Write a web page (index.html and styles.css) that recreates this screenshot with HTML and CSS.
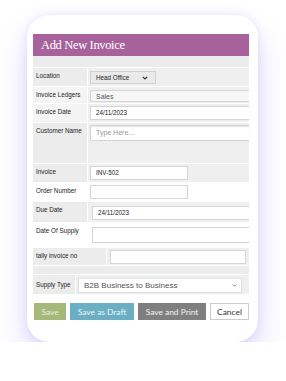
FILE: index.html
```html
<!DOCTYPE html>
<html>
<head>
  <title>Add New Invoice</title>
  <link rel="stylesheet" href="styles.css">
</head>
<body>
  <div class="card">
    <div class="banner">
      <h1>Add New Invoice</h1>
    </div>

    <div class="strip"></div>

    <div class="row r-location">
      <div class="label">Location</div>
      <div class="field">
        <div class="select small">Head Office
          <svg class="caret" width="6" height="4" viewBox="0 0 6 4"><path d="M0.8 0.8 L3 3 L5.2 0.8" fill="none" stroke="#333" stroke-width="1.2"/></svg>
        </div>
      </div>
    </div>
    <div class="row r-ledger light">
      <div class="label">Invoice Ledgers</div>
      <div class="field"><div class="input wide soft">Sales</div></div>
    </div>
    <div class="row r-date light">
      <div class="label">Invoice Date</div>
      <div class="field"><div class="input wide">24/11/2023</div></div>
    </div>
    <div class="row r-customer">
      <div class="label">Customer Name</div>
      <div class="field"><div class="input wide tall placeholder">Type Here...</div></div>
    </div>
    <div class="row r-invoice">
      <div class="label">Invoice</div>
      <div class="field"><div class="input short">INV-502</div></div>
    </div>
    <div class="row r-order white">
      <div class="label">Order Number</div>
      <div class="field"><div class="input short"></div></div>
    </div>
    <div class="row r-due">
      <div class="label">Due Date</div>
      <div class="field indent"><div class="input wide">24/11/2023</div></div>
    </div>
    <div class="row r-supply white">
      <div class="label">Date Of Supply</div>
      <div class="field indent"><div class="input wide tall"></div></div>
    </div>
    <div class="row r-tally">
      <div class="label tally">tally invoice no</div>
      <div class="field"><div class="input tally-input"></div></div>
    </div>

    <div class="strip thin"></div>

    <div class="row r-type">
      <div class="label type">Supply Type</div>
      <div class="field">
        <div class="select big">B2B Business to Business
          <svg class="caret" width="5" height="3" viewBox="0 0 6 4"><path d="M0.8 0.8 L3 3 L5.2 0.8" fill="none" stroke="#555" stroke-width="1"/></svg>
        </div>
      </div>
    </div>

    <div class="buttons">
      <button class="btn save">Save</button>
      <button class="btn draft">Save as Draft</button>
      <button class="btn print">Save and Print</button>
      <button class="btn cancel">Cancel</button>
    </div>
  </div>
</body>
</html>
```

FILE: styles.css
```css
body {
  margin: 0;
  background: #fff;
  font-family: "Liberation Sans", Arial, sans-serif;
}

.card {
  margin: 15px 0 0 27px;
  width: 216px;
  height: 308px;
  padding: 19px 9px 0 6px;
  background: #fff;
  border-radius: 22px;
  box-shadow: 0 18px 30px rgba(150, 130, 255, 0.32), 0 0 8px rgba(170, 160, 255, 0.25);
}

.banner {
  background-color: #a8629b;
  height: 22px;
  padding-left: 8px;
}

.banner h1 {
  margin: 0;
  font-family: "Liberation Serif", serif;
  font-weight: normal;
  font-size: 12.5px;
  letter-spacing: -0.35px;
  line-height: 23px;
  color: #fff;
}

.strip {
  height: 11px;
  background: #ececec;
}

.strip.thin {
  height: 8px;
  border-top: 1px solid #fff;
}

.row {
  display: flex;
  background: #efefef;
  border-top: 1px solid #fff;
  box-sizing: border-box;
}

.row.light .label {
  background: #f4f4f4;
}

.row.white .label,
.row.white .field {
  background: #fff;
}

.label {
  width: 55px;
  flex-shrink: 0;
  box-sizing: border-box;
  padding: 4px 0 0 3px;
  font-size: 6.3px;
  color: #222;
  border-right: 1px solid #fff;
  background: #ececec;
}

.label.tally {
  width: 74px;
}

.label.type {
  width: 43px;
  padding-top: 6px;
}

.field {
  flex: 1;
  padding: 2px 0 0 2px;
  background: #efefef;
}

.field.indent {
  padding-left: 4px;
}

.input,
.select {
  box-sizing: border-box;
  background: #fff;
  border: 1px solid #d4d4d4;
  font-size: 6.3px;
  color: #222;
  padding: 0 5px;
  height: 14px;
  line-height: 12px;
}

.input.wide {
  width: 100%;
  border-right: none;
}

.input.soft {
  background: #f7f7f7;
  border-radius: 3px 0 0 3px;
  color: #555;
  font-size: 7px;
  height: 12px;
  line-height: 11px;
  margin-top: 1px;
}

.input.tall {
  height: 16px;
  line-height: 14px;
}

.placeholder {
  color: #999;
  font-size: 7px;
  border-radius: 2px 0 0 2px;
  box-shadow: inset 0 1px 1px rgba(0, 0, 0, 0.1);
}

.input.short {
  width: 98px;
}

.input.tally-input {
  width: 136px;
  margin-left: 1px;
}

.select {
  display: flex;
  justify-content: space-between;
  align-items: center;
}

.select.small {
  width: 66px;
  height: 13px;
  background: #eaeaea;
  border-color: #d0d0d0;
  font-size: 6.3px;
  margin-top: 1px;
  padding-right: 7px;
}

.select.big {
  width: 164px;
  height: 15px;
  color: #555;
  font-size: 8px;
  border-color: #e0e0e0;
  padding-right: 4px;
}

.r-location { height: 19px; }
.r-ledger { height: 17px; }
.r-date { height: 19px; }
.r-customer { height: 41px; }
.r-invoice { height: 19px; }
.r-order { height: 19px; }
.r-due { height: 21px; }
.r-supply { height: 25px; }
.r-tally { height: 18px; }
.r-type { height: 20px; }

.r-due .field,
.r-supply .field {
  padding-top: 4px;
}

.r-type .field {
  padding-top: 3px;
}

.buttons {
  display: flex;
  gap: 4px;
  margin-top: 9px;
  padding-left: 1px;
}

.btn {
  height: 17px;
  border: none;
  padding: 0;
  font-family: Lato, "Open Sans", sans-serif;
  font-size: 8.4px;
  color: #f4f4f4;
}

.save {
  width: 32px;
  background: #a7b97a;
  color: #e8efd8;
}

.draft {
  width: 64px;
  background: #6aafc3;
}

.print {
  width: 68px;
  background: #7f7f7f;
}

.cancel {
  width: 39px;
  background: #fff;
  border: 1px solid #ccc;
  color: #333;
}
```
